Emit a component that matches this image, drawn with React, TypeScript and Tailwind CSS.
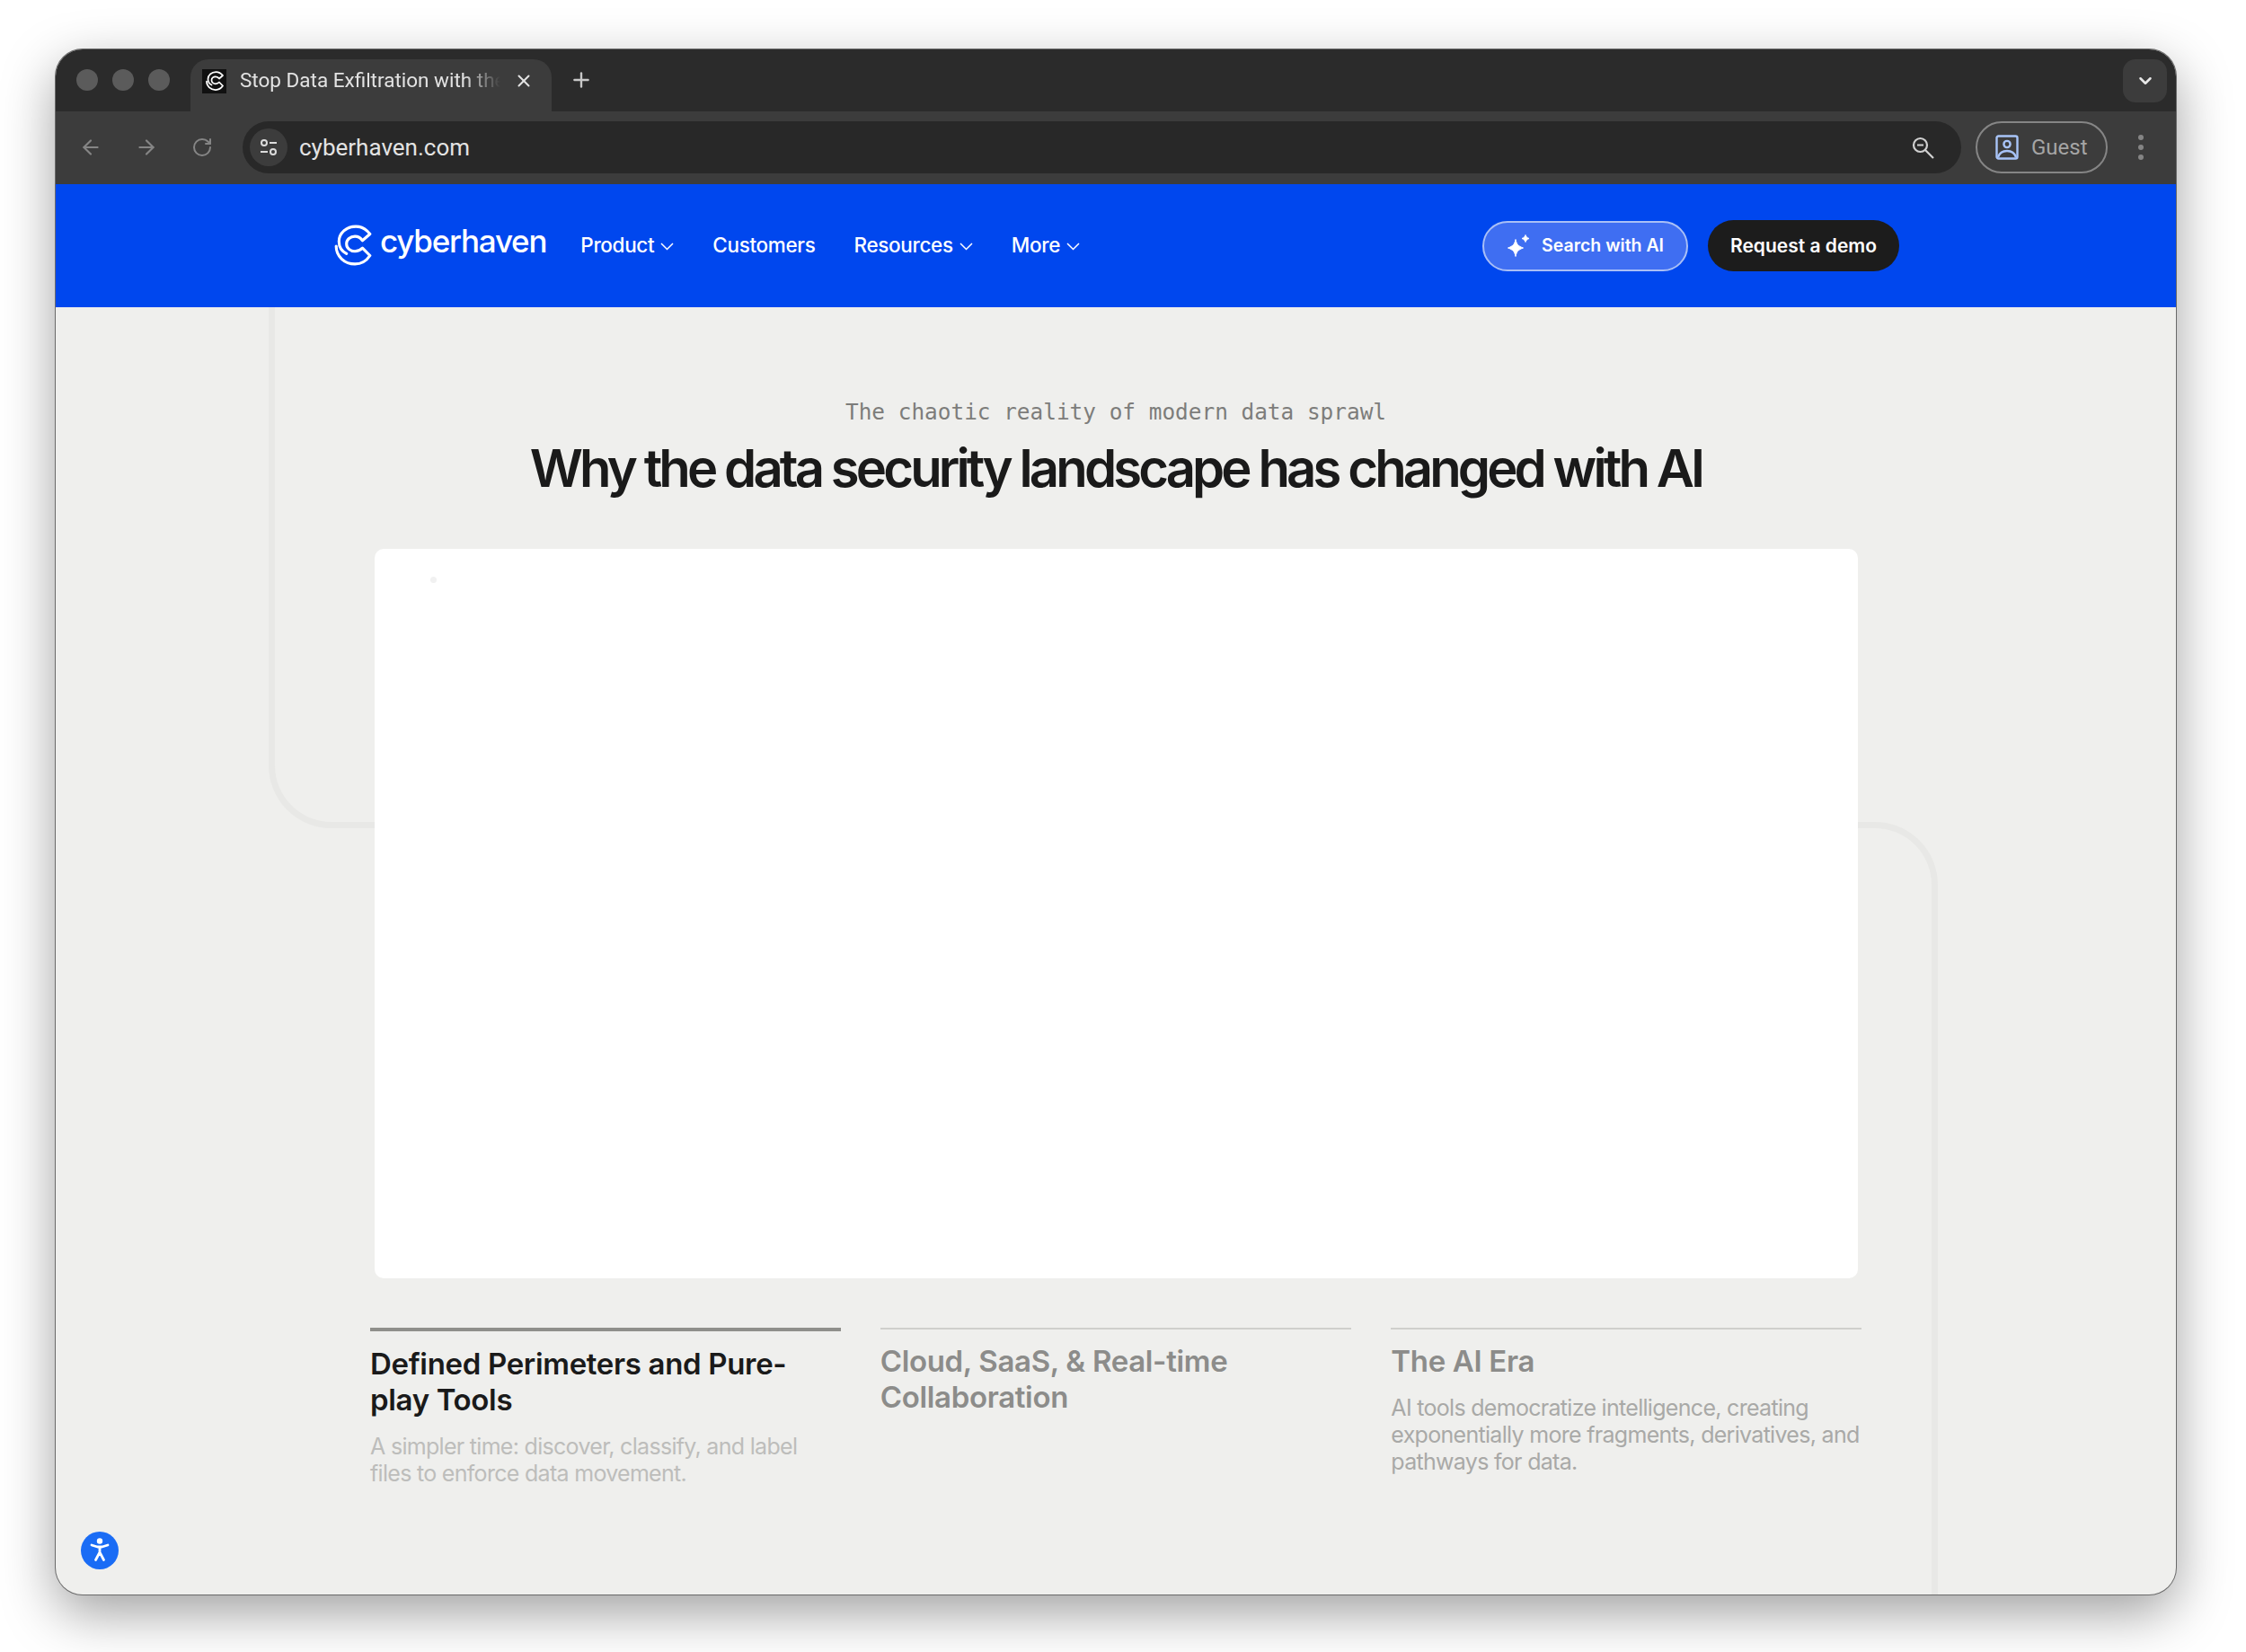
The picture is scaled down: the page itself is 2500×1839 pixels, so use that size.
import { ArrowLeft, ArrowRight, ChevronDown, Plus, RotateCw, X } from 'lucide-react';

const navItems = [
  { label: 'Product', chevron: true },
  { label: 'Customers', chevron: false },
  { label: 'Resources', chevron: true },
  { label: 'More', chevron: true },
];

function LogoMark({ className, strokeWidth = 3 }: { className: string; strokeWidth?: number }) {
  return (
    <svg viewBox="7 5 40 44" fill="none" stroke="currentColor" strokeWidth={strokeWidth} strokeLinejoin="round" strokeLinecap="round" className={className}>
      <path d="M20 36 C14 33 12 28 12 23 C12 14 20 7 30 7 C36 7 41 10 45 15 L37 22 C35 19 32 17.5 29 17.5 C24 17.5 20 21 20 25.5 C20 30 24 33.5 29 33.5 C32 33.5 35 32 37 30 L45 38 C41 44 35 47 29 47 C18 47 9 39 9 28" />
    </svg>
  );
}

function NavChevron() {
  return (
    <svg viewBox="0 0 15 9" fill="none" stroke="currentColor" strokeWidth="1.5" className="w-[15px] h-[9px] mt-[2px]">
      <path d="M1 1 L7.5 7.5 L14 1" />
    </svg>
  );
}

function Sparkles() {
  return (
    <svg viewBox="0 0 27 27" fill="white" stroke="white" strokeWidth="1" strokeLinejoin="round" className="w-[27px] h-[27px]">
      <path d="M10 6.5 C11 12 13 14 18.5 16 C13 18 11 20 10 25.5 C9 20 7 18 1.5 16 C7 14 9 12 10 6.5 Z" />
      <path d="M21 1.5 C21.5 3.5 22.5 4.5 25 5.5 C22.5 6.5 21.5 7.5 21 9.5 C20.5 7.5 19.5 6.5 17 5.5 C19.5 4.5 20.5 3.5 21 1.5 Z" />
    </svg>
  );
}

function Step({ title, desc, active, titleClass, descClass, className }: { title: string; desc?: string; active?: boolean; titleClass: string; descClass: string; className: string }) {
  return (
    <div className={className}>
      <div className={active ? 'h-1 bg-[#8f8f8b]' : 'h-0.5 bg-[#cfcfcc] mb-0.5'} />
      <h3 className={`text-[33px] leading-[40px] font-semibold tracking-[-0.01em] ${active ? 'mt-4' : 'mt-[15px]'} ${titleClass}`}>{title}</h3>
      {desc && <p className={`text-[25px] leading-[30px] tracking-[-0.028em] mt-[17px] ${descClass}`}>{desc}</p>}
    </div>
  );
}

export default function App() {
  return (
    <div className="w-[2500px] h-[1839px] bg-white pt-[55px] pl-[62px] font-['Inter',sans-serif]">
      <div className="relative w-[2360px] h-[1720px] rounded-[30px] overflow-hidden flex flex-col bg-[#efefed] shadow-[0_0_0_1px_#6a6a6a,0_20px_60px_rgba(0,0,0,0.38)]">
        {/* tab strip */}
        <div className="h-[69px] bg-[#2b2b2b] flex items-end shrink-0">
          <div className="flex gap-4 pl-[23px] pb-[23px] w-[150px]">
            <span className="w-6 h-6 rounded-full bg-[#5b5b5b]" />
            <span className="w-6 h-6 rounded-full bg-[#5b5b5b]" />
            <span className="w-6 h-6 rounded-full bg-[#5b5b5b]" />
          </div>
          <div className="w-[402px] h-[58px] bg-[#3c3c3c] rounded-t-[20px] flex items-center pl-[13px] pr-[20px] pb-[10px]">
            <div className="w-[27px] h-[27px] bg-[#111111] flex items-center justify-center shrink-0 text-white">
              <LogoMark className="w-[20px] h-[22px]" strokeWidth={3.5} />
            </div>
            <span className="ml-[15px] w-[290px] shrink-0 text-[22.5px] text-[#e3e3e3] font-['Roboto',sans-serif] whitespace-nowrap [mask-image:linear-gradient(to_right,black_86%,transparent_100%)]">Stop Data Exfiltration with the</span>
            <X className="ml-auto w-[22px] h-[22px] text-[#e3e3e3] shrink-0" strokeWidth={2.2} />
          </div>
          <Plus className="ml-[20px] mb-[22px] w-[26px] h-[26px] text-[#c8c8c8]" strokeWidth={2.2} />
          <div className="ml-auto mr-[10px] mb-[10px] w-[49px] h-[48px] rounded-[14px] bg-[#3c3c3c] flex items-center justify-center">
            <ChevronDown className="w-[22px] h-[22px] text-[#e8e8e8]" strokeWidth={2.8} />
          </div>
        </div>

        {/* toolbar */}
        <div className="h-[81px] bg-[#3c3c3c] flex items-center shrink-0 pb-[1px]">
          <ArrowLeft className="ml-[26px] w-[26px] h-[26px] text-[#858585]" strokeWidth={2} />
          <ArrowRight className="ml-[36px] w-[26px] h-[26px] text-[#858585]" strokeWidth={2} />
          <RotateCw className="ml-[37px] w-[24px] h-[24px] text-[#858585]" strokeWidth={2} />
          <div className="ml-[33px] w-[1913px] h-[58px] rounded-full bg-[#282828] flex items-center pl-[8px] pr-[30px]">
            <div className="w-[42px] h-[42px] rounded-full bg-[#3c3c3c] flex items-center justify-center">
              <svg viewBox="0 0 22 22" fill="none" stroke="#dcdcdc" strokeWidth="2" className="w-[22px] h-[22px]">
                <circle cx="6" cy="6" r="3" />
                <path d="M12 6 H20 M2 16 H10" />
                <circle cx="16" cy="16" r="3" />
              </svg>
            </div>
            <span className="ml-[13px] text-[26px] text-[#e3e3e3] font-['Roboto',sans-serif]">cyberhaven.com</span>
            <svg viewBox="0 0 25 25" fill="none" stroke="#d0d0d0" strokeWidth="2.2" className="ml-auto w-[25px] h-[25px]">
              <circle cx="9.5" cy="9.5" r="7.5" />
              <path d="M6 9.5 H13 M15 15 L24 24" />
            </svg>
          </div>
          <div className="ml-[16px] w-[147px] h-[58px] rounded-full border-2 border-[#858585] flex items-center pl-[20px]">
            <svg viewBox="0 0 26 28" fill="none" stroke="#a8c4f8" strokeWidth="2.4" className="w-[26px] h-[28px]">
              <rect x="1.5" y="1.5" width="23" height="25" rx="2" />
              <circle cx="13" cy="10.5" r="3.6" />
              <path d="M3 25 C5 19 9 18 13 18 C17 18 21 19 23 25" />
            </svg>
            <span className="ml-[14px] text-[24px] text-[#a5a5a5] font-['Roboto',sans-serif]">Guest</span>
          </div>
          <div className="ml-[34px] flex flex-col gap-[5px]">
            <span className="w-[6px] h-[6px] rounded-full bg-[#858585]" />
            <span className="w-[6px] h-[6px] rounded-full bg-[#858585]" />
            <span className="w-[6px] h-[6px] rounded-full bg-[#858585]" />
          </div>
        </div>

        {/* site nav */}
        <header className="h-[137px] bg-[#0047ee] flex items-center shrink-0 pl-[310px] text-white">
          <div className="flex items-center -mt-[2px]">
            <LogoMark className="w-[42px] h-[46px]" />
            <span className="ml-[9px] text-[35px] leading-none font-medium tracking-[-0.035em] -mt-[8px]">cyberhaven</span>
          </div>
          <nav className="ml-[38px] flex items-center gap-[43px] -mt-[1px]">
            {navItems.map(item => (
              <a key={item.label} className="flex items-center gap-[7px] text-[22.5px] font-medium tracking-[-0.015em]">
                {item.label}
                {item.chevron && <NavChevron />}
              </a>
            ))}
          </nav>
          <div className="ml-[448px] flex items-center gap-[22px]">
            <button className="w-[229px] h-[56px] rounded-full bg-[#3f6ef2] border-2 border-[#a9bff6] flex items-center justify-center gap-[12px] text-[19.5px] font-semibold">
              <Sparkles />
              Search with AI
            </button>
            <button className="w-[213px] h-[57px] rounded-full bg-[#1c1c1c] text-[21px] font-semibold">Request a demo</button>
          </div>
        </header>

        {/* page */}
        <main className="relative flex-1 flex flex-col items-center">
          <div className="absolute left-[237px] top-0 w-[200px] h-[580px] border-l-[7px] border-b-[7px] border-[#e8e8e6] rounded-bl-[70px]" />
          <div className="absolute left-[1950px] top-[573px] bottom-0 w-[145px] border-t-[7px] border-r-[7px] border-[#e8e8e6] rounded-tr-[70px]" />

          <p className="relative mt-[101px] text-[24.4px] leading-[32px] text-[#7d7d7b] font-['DejaVu_Sans_Mono',monospace]">The chaotic reality of modern data sprawl</p>
          <h1 className="relative mt-[10px] text-[58px] leading-[72px] font-semibold tracking-[-0.067em] text-[#1a1a1a] whitespace-nowrap">Why the data security landscape has changed with AI</h1>

          <div className="relative mt-[54px] w-[1651px] h-[812px] rounded-[10px] bg-white">
            <span className="absolute left-[62px] top-[31px] w-[7px] h-[7px] rounded-full bg-[#f1f1f1]" />
          </div>

          <div className="relative mt-[55px] w-[1660px] flex gap-[44px]">
            <Step className="w-[524px]" active title="Defined Perimeters and Pure-play Tools" desc="A simpler time: discover, classify, and label files to enforce data movement." titleClass="text-[#1a1a1a]" descClass="text-[#bdbdbb]" />
            <Step className="w-[525px]" title="Cloud, SaaS, & Real-time Collaboration" titleClass="text-[#8c8c8a]" descClass="" />
            <Step className="w-[524px]" title="The AI Era" desc="AI tools democratize intelligence, creating exponentially more fragments, derivatives, and pathways for data." titleClass="text-[#8c8c8a]" descClass="text-[#a9a9a7]" />
          </div>

          <button className="absolute left-[28px] bottom-[28px] w-[42px] h-[42px] rounded-full bg-[#1a6cf5] flex items-center justify-center">
            <svg viewBox="0 0 30 30" fill="none" stroke="white" className="w-[30px] h-[30px]">
              <circle cx="15" cy="4.5" r="3.2" fill="white" stroke="none" />
              <path d="M6 9 L12.5 11 H17.5 L24 9 M15 11 V18 M15 17 L10.5 25.5 M15 17 L19.5 25.5" strokeWidth="2.8" strokeLinecap="round" strokeLinejoin="round" />
            </svg>
          </button>
        </main>
      </div>
    </div>
  );
}
